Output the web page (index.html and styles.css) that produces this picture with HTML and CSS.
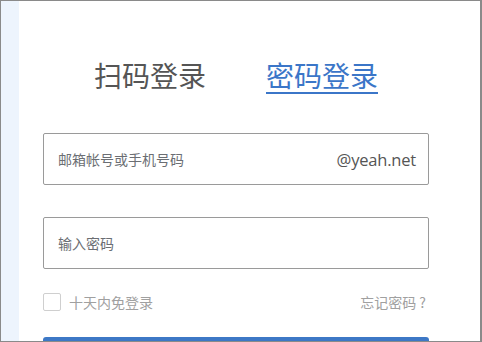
FILE: index.html
```html
<!DOCTYPE html>
<html lang="zh">
<head>
<meta charset="utf-8">
<link rel="stylesheet" href="styles.css">
</head>
<body>
<div class="frame">
  <div class="strip"></div>
  <div class="panel">
    <div class="tabs">
      <span class="tab">扫码登录</span>
      <span class="tab active">密码登录</span>
    </div>
    <div class="field first">
      <span class="ph">邮箱帐号或手机号码</span>
      <span class="suffix">@yeah.net</span>
    </div>
    <div class="field second">
      <span class="ph">输入密码</span>
    </div>
    <div class="row">
      <label class="remember"><span class="box"></span><span>十天内免登录</span></label>
      <span class="forgot">忘记密码 ?</span>
    </div>
    <div class="btn"></div>
  </div>
</div>
</body>
</html>
```
FILE: styles.css
```css
html, body {
  margin: 0;
  padding: 0;
  background: #fff;
}
.frame {
  width: 482px;
  height: 342px;
  box-sizing: border-box;
  border: 1px solid #8a8a8a;
  border-right-width: 2px;
  display: flex;
  overflow: hidden;
  font-family: "Noto Sans CJK SC", "Noto Sans", sans-serif;
}
.strip {
  width: 18px;
  flex: none;
  background: #edf4fd;
}
.panel {
  flex: 1;
  padding: 0 51px 0 24px;
  display: flex;
  flex-direction: column;
}
.panel > * {
  flex: none;
}
.tabs {
  display: flex;
  justify-content: center;
  gap: 60px;
  margin-top: 59px;
  height: 36px;
}
.tab {
  font-size: 28px;
  line-height: 30px;
  color: #555;
  padding-bottom: 2px;
  height: 30px;
}
.tab.active {
  color: #3b76c8;
  border-bottom: 2px solid #3b76c8;
}
.field {
  height: 52px;
  box-sizing: border-box;
  border: 1px solid #9a9a9a;
  border-radius: 2px;
  display: flex;
  align-items: center;
  justify-content: space-between;
  padding: 0 12px 0 14px;
}
.field.first { margin-top: 37px; }
.field.second { margin-top: 32px; }
.ph {
  font-size: 14px;
  color: #6b6e73;
}
.suffix {
  font-family: "Open Sans", "Noto Sans", sans-serif;
  font-size: 16.5px;
  color: #555;
  letter-spacing: -0.2px;
}
.row {
  margin-top: 24px;
  height: 18px;
  display: flex;
  align-items: center;
  justify-content: space-between;
}
.remember {
  display: flex;
  align-items: center;
  gap: 8px;
  font-size: 14px;
  color: #a0a0a0;
}
.box {
  width: 16px;
  height: 16px;
  border: 1px solid #cfcfcf;
  border-radius: 2px;
}
.forgot {
  font-size: 14px;
  color: #a0a0a0;
  margin-right: 3px;
}
.btn {
  margin-top: 26px;
  height: 44px;
  background: #3d78c6;
  border-radius: 3px;
}
```
